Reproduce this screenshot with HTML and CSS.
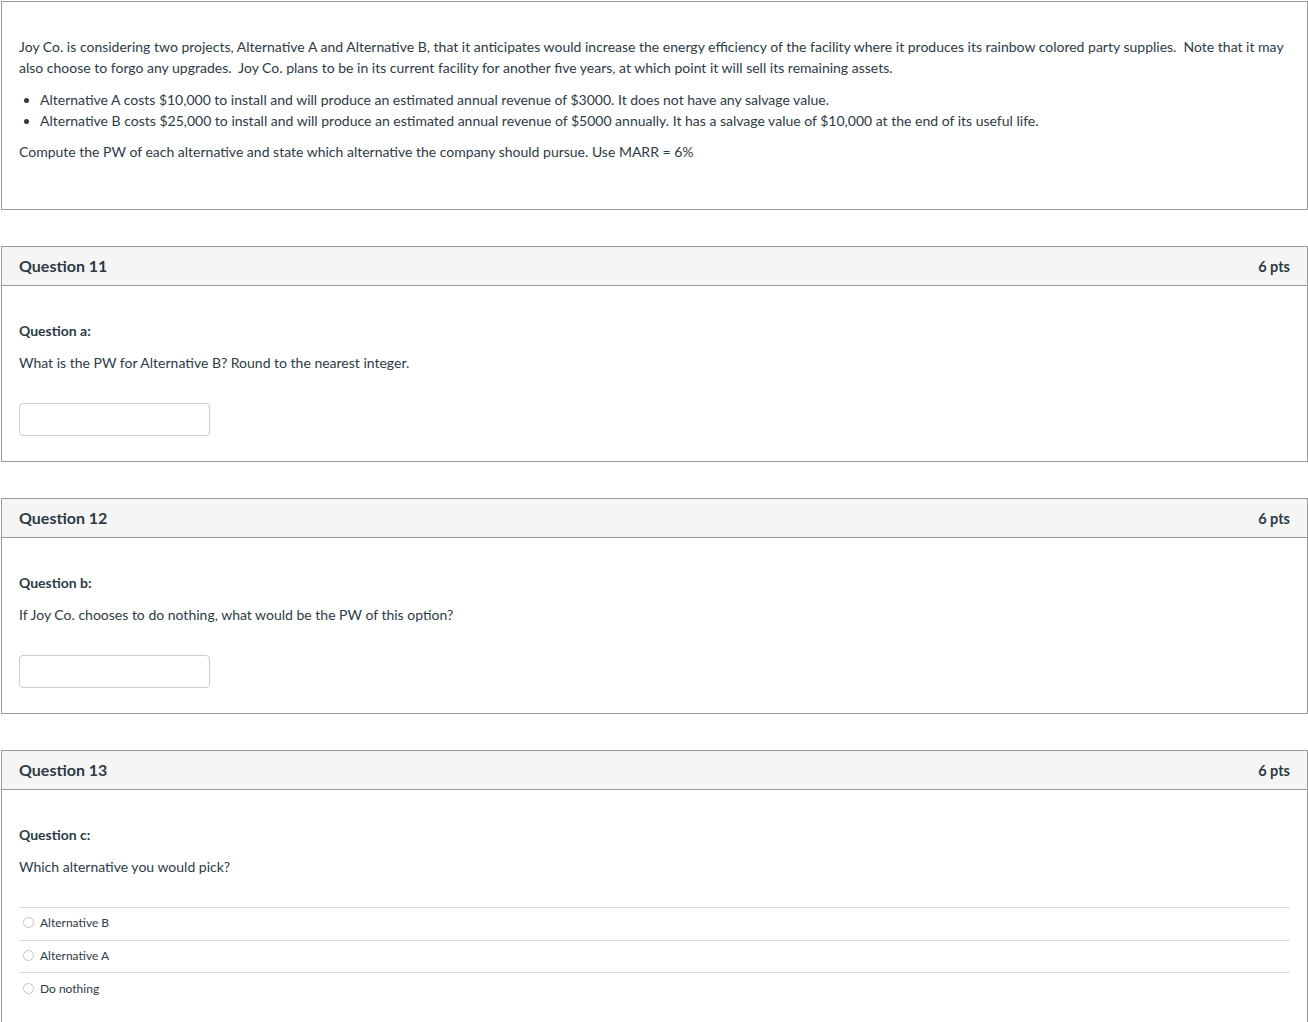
FILE: index.html
```html
<!DOCTYPE html>
<html>
<head>
<meta charset="utf-8">
<link rel="stylesheet" href="styles.css">
</head>
<body>
<div class="page">
  <div class="box intro">
    <p>Joy Co. is considering two projects, Alternative A and Alternative B, that it anticipates would increase the energy efficiency of the facility where it produces its rainbow colored party supplies.&nbsp; Note that it may also choose to forgo any upgrades.&nbsp; Joy Co. plans to be in its current facility for another five years, at which point it will sell its remaining assets.</p>
    <ul>
      <li>Alternative A costs $10,000 to install and will produce an estimated annual revenue of $3000. It does not have any salvage value.</li>
      <li>Alternative B costs $25,000 to install and will produce an estimated annual revenue of $5000 annually. It has a salvage value of $10,000 at the end of its useful life.</li>
    </ul>
    <p>Compute the PW of each alternative and state which alternative the company should pursue. Use MARR = 6%</p>
  </div>

  <div class="box question">
    <div class="qhead"><span class="qname">Question 11</span><span class="qpts">6 pts</span></div>
    <div class="qbody">
      <p class="sub">Question a:</p>
      <p>What is the PW for Alternative B? Round to the nearest integer.</p>
      <input class="answer-input" type="text">
    </div>
  </div>

  <div class="box question">
    <div class="qhead"><span class="qname">Question 12</span><span class="qpts">6 pts</span></div>
    <div class="qbody">
      <p class="sub">Question b:</p>
      <p>If Joy Co. chooses to do nothing, what would be the PW of this option?</p>
      <input class="answer-input" type="text">
    </div>
  </div>

  <div class="box question">
    <div class="qhead"><span class="qname">Question 13</span><span class="qpts">6 pts</span></div>
    <div class="qbody last">
      <p class="sub">Question c:</p>
      <p>Which alternative you would pick?</p>
      <div class="answers">
        <label class="ans"><span class="radio"></span>Alternative B</label>
        <label class="ans"><span class="radio"></span>Alternative A</label>
        <label class="ans"><span class="radio"></span>Do nothing</label>
      </div>
    </div>
  </div>
</div>
</body>
</html>
```

FILE: styles.css
```css
html, body {
  margin: 0;
  padding: 0;
  background: #ffffff;
}
body {
  font-family: Lato, "Noto Sans", sans-serif;
  font-size: 14px;
  line-height: 21px;
  color: #2d3b45;
}
.page {
  padding: 1px 0 0 1px;
  width: 1307px;
}
.box {
  border: 1px solid #9a9a9a;
  box-sizing: border-box;
  width: 1307px;
  margin-bottom: 36px;
}
.intro {
  height: 209px;
  padding: 34px 17px 0 17px;
}
.intro p {
  margin: 0 0 11px 0;
}
.intro ul {
  margin: 0 0 10px 0;
  padding-left: 21px;
}
.qhead {
  display: flex;
  justify-content: space-between;
  align-items: center;
  height: 38px;
  padding: 0 17px 0 17px;
  background: #f5f5f5;
  border-bottom: 1px solid #9a9a9a;
}
.qname {
  font-size: 16px;
  font-weight: 700;
  color: #2d3b45;
  position: relative;
  top: -1px;
}
.qpts {
  font-size: 14.5px;
  font-weight: 700;
  color: #2d3b45;
}
.qbody {
  padding: 34px 17px 25px 17px;
}
.qbody p {
  margin: 0 0 11px 0;
}
.qbody .sub {
  font-weight: 700;
}
.answer-input {
  display: block;
  margin-top: 30px;
  width: 191px;
  height: 33px;
  box-sizing: border-box;
  border: 1px solid #c7cdd1;
  border-radius: 4px;
  background: #fff;
  padding: 0 6px;
  font: inherit;
}
.answers {
  margin-top: 30px;
  border-top: 1px solid #dcdcdc;
}
.ans {
  display: flex;
  align-items: center;
  height: 32.5px;
  padding-bottom: 2px;
  box-sizing: border-box;
  border-bottom: 1px solid #dcdcdc;
  font-size: 12px;
  color: #2d3b45;
  padding-left: 4px;
}
.ans:last-child {
  border-bottom: none;
}
.radio {
  width: 9px;
  height: 9px;
  border: 1px solid #c3c3c3;
  border-radius: 50%;
  margin-right: 6px;
  background: #fff;
}
```
